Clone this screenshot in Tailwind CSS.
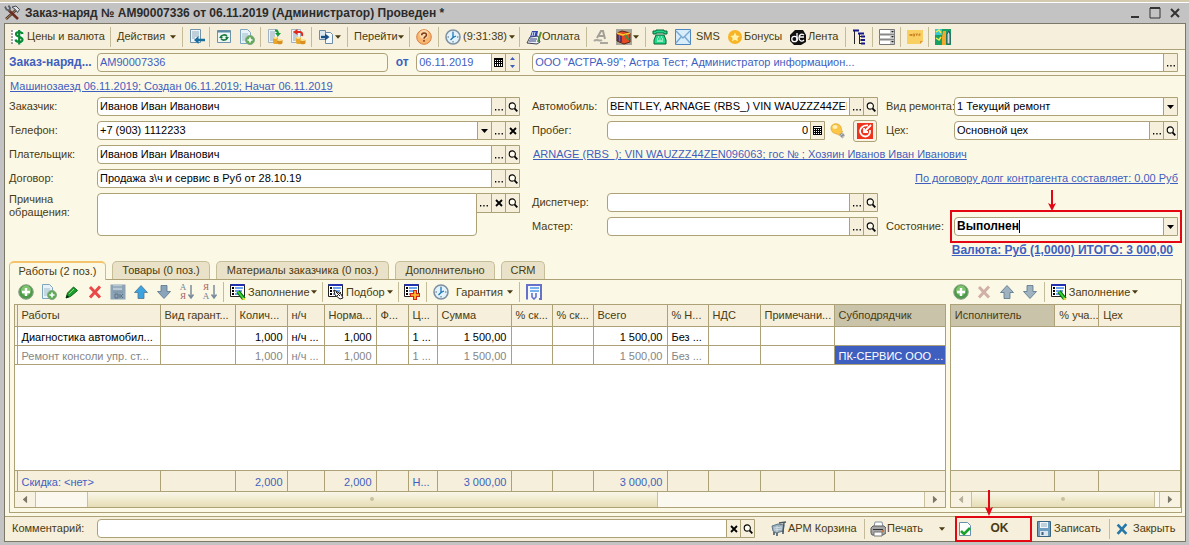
<!DOCTYPE html>
<html lang="ru">
<head>
  <meta charset="UTF-8" />
  <meta name="viewport" content="width=device-width, initial-scale=1" />
  <title>Заказ-наряд № АМ90007336</title>
  <script src="https://cdn.jsdelivr.net/npm/@tailwindcss/browser@4"></script>
</head>
<body class="bg-[#c3c3c3] font-['Liberation_Sans',Arial,sans-serif] text-[11px] leading-[13px] text-[#4a3b12]">

  <!-- Icon sprite -->
  <svg class="hidden">
    <symbol id="i-tri" viewBox="0 0 7 4"><path d="M0 0h7L3.5 4z" fill="currentColor"/></symbol>
    <symbol id="i-dots" viewBox="0 0 10 10"><path d="M1 7h1.300v1.500H1zM4.300 7h1.300v1.500H4.300zM7.600 7h1.300v1.500H7.600z" fill="#000"/></symbol>
    <symbol id="i-x" viewBox="0 0 10 10"><path d="M2 2l6 6M8 2L2 8" stroke="#000" stroke-width="1.800"/></symbol>
    <symbol id="i-lens" viewBox="0 0 10 10"><circle cx="4.3" cy="4" r="3.1" fill="#fffdf0" stroke="#000" stroke-width="1.1"/><path d="M6.5 6.3L9.3 9.3" stroke="#000" stroke-width="1.8"/></symbol>
    <symbol id="i-calc" viewBox="0 0 9 9"><path d="M0 0h9v9H0z" fill="#000"/><path d="M1 1h7v1H1zM1 3h1v1H1zM3 3h1v1H3zM5 3h1v1H5zM7 3h1v1H7zM1 5h1v1H1zM3 5h1v1H3zM5 5h1v1H5zM7 5h1v1H7zM1 7h1v1H1zM3 7h1v1H3zM5 7h1v1H5zM7 7h1v1H7z" fill="#fff"/></symbol>
    <symbol id="i-calendar" viewBox="0 0 9 9"><path d="M0 0h9v9H0z" fill="#000"/><path d="M1 2h1v1H1zM3 2h1v1H3zM5 2h1v1H5zM7 2h1v1H7zM1 4h1v1H1zM3 4h1v1H3zM5 4h1v1H5zM7 4h1v1H7zM1 6h1v2H1zM3 6h1v2H3zM5 6h1v2H5zM7 6h1v2H7z" fill="#fff"/></symbol>
    <symbol id="i-plus" viewBox="0 0 16 16"><circle cx="8" cy="8" r="7.3" fill="#4e9a4c" stroke="#8fa48c"/><circle cx="8" cy="6.5" r="5" fill="#7fc36c"/><path d="M8 4v8M4 8h8" stroke="#fff" stroke-width="2.4"/></symbol>
    <symbol id="i-doc-plus" viewBox="0 0 16 16"><path d="M1.500 .5h7l3 3v11h-10z" fill="#e9f2f8" stroke="#7ea6bd"/><path d="M3 5h6M3 7h6M3 9h4M3 11h3" stroke="#9dbdce"/><circle cx="11" cy="11" r="4.500" fill="#5fab58" stroke="#88a886"/><path d="M11 8.500v5M8.500 11h5" stroke="#fff" stroke-width="1.600"/></symbol>
    <symbol id="i-arrow-up" viewBox="0 0 16 16"><path d="M8 1.500l6.500 7h-3.500v6H5v-6H1.500z" fill="currentColor" stroke="#55738c" stroke-width=".8"/></symbol>
    <symbol id="i-cross" viewBox="0 0 16 16"><path d="M3 3l10 10.500M13 2.500L3 13.500" stroke="currentColor" stroke-width="3"/></symbol>
    <symbol id="i-clock" viewBox="0 0 16 16"><circle cx="8" cy="8" r="7" fill="#e4f3fb" stroke="#7d91a0" stroke-width="1.600"/><path d="M8 2.500v1.500M8 12v1.500M2.500 8H4M12 8h1.500" stroke="#4e6d85"/><path d="M8 3.500V8.500L11 7M8 8.500L5.500 11" stroke="#1877b8" stroke-width="1.300" fill="none"/></symbol>
    <symbol id="i-list" viewBox="0 0 16 16"><path d="M.5.5h14v12H.5z" fill="#fff" stroke="#222"/><path d="M.5 1h14" stroke="#2431b0" stroke-width="2"/><path d="M2 4h2M2 7h2M2 10h2" stroke="#000" stroke-width="2"/><path d="M5 4h8M5 7h7M5 10h5" stroke="#3c86e8" stroke-width="1.600"/></symbol>
    <symbol id="i-fill" viewBox="0 0 16 16"><use href="#i-list"/><path d="M8 7.500l6 7.500" stroke="#0c6b12" stroke-width="4"/><path d="M8 7.500l5.500 7" stroke="#37d534" stroke-width="2"/><path d="M12.500 14.500l2.500 1" stroke="#e5d632" stroke-width="2"/></symbol>
    <symbol id="i-sort" viewBox="0 0 16 16"><path d="M12 1v12M9.500 10.500L12 14l2.500-3.500" stroke="#7b8a9b" stroke-width="1.500" fill="none"/></symbol>
    <symbol id="i-coins" viewBox="0 0 16 16"><path d="M1.500.5h9v13h-9z" fill="#eef3f7" stroke="#9fb3c2"/><path d="M3 3h5M3 5h5M3 7h5M3 9h4M3 11h4" stroke="#8fa9bb"/><path d="M6 8.500v5c0 2 5 2 5 0v-5z" fill="#e8a62a"/><path d="M10 11v3c0 1.800 5.500 1.800 5.500 0v-3z" fill="#d99020"/><ellipse cx="8.500" cy="8.800" rx="2.500" ry="1.100" fill="#fbe08a"/><ellipse cx="12.700" cy="11" rx="2.700" ry="1.100" fill="#fbe08a"/></symbol>
  </svg>

  <div class="flex min-h-screen flex-col border-t-2 border-[#d3cab0]">
    <!-- Title bar -->
    <header class="flex h-[21px] items-center border-t border-white pl-1 pr-2">
      <svg class="h-4 w-4" viewBox="0 0 16 16"><path d="M2 14L12 5" stroke="#4c3a32" stroke-width="2.600"/><path d="M2 14L12 5" stroke="#b58a5a" stroke-width="1"/><path d="M4.500 5l9.500 9" stroke="#6a2c20" stroke-width="2.600"/><path d="M1 1.500l1.500 3 3 1 .5-2.500-1.500-2.500" fill="none" stroke="#5b6068" stroke-width="1.800"/><path d="M8 2l4-1 3.500 3.500-2 3-2-3z" fill="#dfe3e7" stroke="#474d55"/></svg>
      <h1 class="ml-[5px] flex-1 text-[12px] font-bold text-[#2b2b2b]">Заказ-наряд № АМ90007336 от 06.11.2019 (Администратор) Проведен *</h1>
      <div class="flex items-center gap-2">
        <button aria-label="Свернуть"><svg class="h-3 w-3" viewBox="0 0 12 12"><path d="M2 10h8" stroke="#333" stroke-width="2"/></svg></button>
        <button aria-label="Развернуть"><svg class="h-3 w-3" viewBox="0 0 12 12"><path d="M1 1h10v10H1z" fill="none" stroke="#333"/><path d="M1 1h10" stroke="#333" stroke-width="2"/></svg></button>
        <button aria-label="Закрыть окно"><svg class="h-3 w-3" viewBox="0 0 12 12"><path d="M2 2l8 8M10 2l-8 8" stroke="#333" stroke-width="2"/></svg></button>
      </div>
    </header>

    <div class="mb-[3px] ml-1 mr-[3px] flex flex-1 flex-col border border-[#7b7868] bg-[#fcf8e6] [&_svg]:shrink-0">
      <!-- Main toolbar -->
      <nav class="flex h-[26px] items-center whitespace-nowrap border-b border-[#aca177] bg-[#f5efdb] pl-[5px] [&>button]:flex [&>button]:h-full [&>button]:shrink-0 [&>button]:items-center [&>i]:mx-[6px] [&>i]:h-5 [&>i]:w-px [&>i]:shrink-0 [&>i]:bg-[#c4bb98]">
        <button class="w-[94px] gap-px"><svg class="h-4 w-4" viewBox="0 0 16 16"><path d="M1 1h12v13H1z" fill="#fff"/><path d="M1 2h2M1 5h2M1 8h2M1 11h2M1 14h2" stroke="#446"/><path d="M12.500 5C12 2.500 6 2.500 6 5.300S12.500 7.500 12.500 10.800 6 13.500 5.500 10.500M9.200 1v14.500" stroke="#0b8a35" stroke-width="2.200" fill="none"/></svg>Цены и валюта</button>
        <i></i>
        <button class="w-[59px] justify-between">Действия <svg class="h-1 w-[6px]"><use href="#i-tri"/></svg></button>
        <i></i>
        <button class="w-[14px]" aria-label="Лист"><svg class="h-4 w-4" viewBox="0 0 16 16"><path d="M1.500.5h10v13h-10z" fill="#eef4f7" stroke="#7192a8"/><path d="M3 3h7M3 5h7M3 7h7M3 9h3" stroke="#8eaabb"/><path d="M16 11H8" stroke="#176f9f" stroke-width="2.500"/><path d="M5 11l4.500-4v8z" fill="#176f9f"/></svg></button>
        <i></i>
        <button class="w-[15px]" aria-label="Обновить"><svg class="h-4 w-4" viewBox="0 0 16 16"><path d="M1.500 1.500h13v12h-13z" fill="#edf6f5" stroke="#6e93a8"/><path d="M1.500 2.500h13" stroke="#5c8aa6" stroke-width="2"/><path d="M5 8.500c0-3 5-3.500 6-1M11 8.500c0 3-5 3.500-6 1" stroke="#177a3a" stroke-width="1.600" fill="none"/><path d="M9 8h4l-2 2.500zM3 9h4L5 6.500z" fill="#177a3a"/></svg></button>
        <button class="ml-2 w-[15px]" aria-label="Скопировать"><svg class="h-4 w-4"><use href="#i-doc-plus"/></svg></button>
        <i></i>
        <button class="w-[15px]" aria-label="Провести"><svg class="h-4 w-4" viewBox="0 0 16 16"><use href="#i-coins"/><path d="M8 1.500c2 0 3 .5 3 3" stroke="#169a35" stroke-width="2" fill="none"/><path d="M8 4h6l-3 3.500z" fill="#169a35"/></svg></button>
        <button class="ml-2 w-[15px]" aria-label="Отменить проведение"><svg class="h-4 w-4" viewBox="0 0 16 16"><use href="#i-coins"/><path d="M7 3h3c2 0 2.500 1.500 2 4" stroke="#e0281c" stroke-width="2" fill="none"/><path d="M3 3l4.500-3v6z" fill="#e0281c"/></svg></button>
        <i></i>
        <button class="w-[23px] justify-between" aria-label="Ввести на основании"><svg class="h-4 w-4" viewBox="0 0 16 16"><path d="M1.500 1.500h6v9h-6z" fill="#dce8f0" stroke="#6b8ca4"/><path d="M7.500 3.500h5l2 2v9h-7z" fill="#f4f9fc" stroke="#6b8ca4"/><path d="M3 8h5" stroke="#174f86" stroke-width="2.400"/><path d="M7 4.500L11.500 8 7 11.500z" fill="#174f86"/></svg><svg class="h-1 w-[6px]"><use href="#i-tri"/></svg></button>
        <i></i>
        <button class="w-[49px] justify-between">Перейти <svg class="h-1 w-[6px]"><use href="#i-tri"/></svg></button>
        <i></i>
        <button class="w-4" aria-label="Справка"><svg class="h-4 w-4" viewBox="0 0 16 16"><circle cx="8" cy="8" r="7.300" fill="#f8b672" stroke="#d77f3c"/><circle cx="8" cy="5.500" r="4.500" fill="#fcd7ab"/><path d="M5.700 6.200c0-3 4.800-3 4.800-.3C10.500 7.700 8 7.600 8 9.700M8 11v1.700" fill="none" stroke="#7c3b14" stroke-width="1.500"/></svg></button>
        <i></i>
        <button class="w-[68px] gap-[2px]"><svg class="h-4 w-4"><use href="#i-clock"/></svg>(9:31:38)<svg class="ml-auto h-1 w-[6px]"><use href="#i-tri"/></svg></button>
        <i></i>
        <button class="w-[54px]"><svg class="h-4 w-4" viewBox="0 0 16 16"><path d="M1 14l3-6 8-1 2 6-3 2z" fill="#eceff8" stroke="#3d3d55"/><path d="M4 8l2-6h6l-1 5z" fill="#3345a8"/><path d="M7 3l-1 4M9 3L8 7" stroke="#d6e3ff"/><path d="M3 12h7M4 10h7" stroke="#37427d" stroke-width="1.200"/><path d="M15 3l-3 10" stroke="#4e9444" stroke-width="2"/></svg>Оплата</button>
        <i></i>
        <button class="w-4" aria-label="Подпись"><svg class="h-4 w-4" viewBox="0 0 16 16"><path d="M4 9l4-7h2l2 8M6 7h5" fill="none" stroke="#a29f97" stroke-width="2"/><path d="M1 12c3-3 5 1 8-1M7 14h8" stroke="#aaa79f" stroke-width="2" fill="none"/></svg></button>
        <button class="ml-[7px] w-[23px] justify-between" aria-label="Цвет"><svg class="h-4 w-4" viewBox="0 0 16 16"><path d="M0 0h16v16H0z" fill="#a7a49a"/><path d="M1 4l5-2 8 2v9l-6 2-7-3z" fill="#e54a22" stroke="#5b2613"/><path d="M1 4l6 2 7-2" stroke="#f5c933" fill="none" stroke-width="1.500"/><path d="M2 6v6M5 7v6" stroke="#26327f" stroke-width="1.500"/><path d="M9 6l4 5" stroke="#339444" stroke-width="2"/></svg><svg class="h-1 w-[6px]"><use href="#i-tri"/></svg></button>
        <i></i>
        <button class="w-4" aria-label="Позвонить"><svg class="h-4 w-4" viewBox="0 0 16 16"><path d="M1 5V2h3V1h8v1h3v3h-3V4H4v1z" fill="#22d887" stroke="#05643b"/><path d="M4 6h8l2 5v4H2v-4z" fill="#22d887" stroke="#05643b"/><path d="M6 8h1M9 8h1M5 10h1M7.500 10h1M10 10h1M5 12h6" stroke="#fff"/></svg></button>
        <button class="ml-[7px] w-[46px] gap-[5px]"><svg class="h-4 w-4" viewBox="0 0 16 16"><path d="M.5.5h15v15H.5z" fill="#d8ecfa" stroke="#4f86bd"/><path d="M1 2l7 7 7-7M1 14l5-6M15 14l-5-6" fill="none" stroke="#78a9d4" stroke-width="1.400"/></svg>SMS</button>
        <button class="ml-[6px] w-[58px] gap-px"><svg class="h-4 w-4" viewBox="0 0 16 16"><circle cx="8" cy="8" r="7" fill="#f7b526"/><path d="M8 3.500l1.400 3 3.200.4-2.300 2.200.6 3.200L8 10.800l-2.900 1.500.6-3.200-2.300-2.200 3.200-.4z" fill="#fff3ae"/></svg>Бонусы</button>
        <button class="ml-[5px] w-[49px] gap-[2px]"><svg class="h-4 w-4" viewBox="0 0 16 16"><path d="M5 1h8l3 5v7l-5 3H4L0 12V6z" fill="#111"/><circle cx="4.500" cy="10" r="2.700" fill="none" stroke="#fff" stroke-width="1.300"/><path d="M7 4v8M9 8h5M14 6c-3-2-5 0-5 3s3 4 5 2" fill="none" stroke="#fff" stroke-width="1.300"/></svg>Лента</button>
        <i></i>
        <button class="w-[14px]" aria-label="Структура"><svg class="h-4 w-4" viewBox="0 0 16 16"><path d="M2.500 2v13M7.500 5v10" stroke="#222"/><path d="M1 1.500h6M6 4.500h6" stroke="#15158c" stroke-width="2"/><path d="M9 7.500h4M9 11h4M9 14.500h4" stroke="#15158c" stroke-width="2"/><path d="M7 7.500h2M7 11h2M7 14.500h2" stroke="#222"/></svg></button>
        <i></i>
        <button class="w-[15px]" aria-label="Серверы"><svg class="h-4 w-4" viewBox="0 0 16 16"><path d="M.5.500h15v15H.5z" fill="#fff" stroke="#777"/><path d="M0 5.500h16M0 10.500h16" stroke="#888" stroke-width="2"/><path d="M11 1h4v3h-4zM11 6.500h4v3h-4zM11 12h4v3h-4z" fill="#ccc"/><path d="M12 2h3l-1.500 1.500zM12 7h3l-1.500 1.500zM12 12h3l-1.500 1.500z" fill="#222"/></svg></button>
        <i></i>
        <button class="w-[15px]" aria-label="Заметка"><svg class="h-4 w-4" viewBox="0 0 16 16"><path d="M0 1h16v11l-3 3H0z" fill="#f9cf61"/><path d="M13 15v-3h3z" fill="#d99b32"/><path d="M3 7V5l1.500 2V5M6 5h1.500v2H6zM8.500 5H11M9.700 5v2M12 7V5h1.500M12 6h1.500" fill="none" stroke="#c4741c" stroke-width=".8"/></svg></button>
        <i></i>
        <button class="w-4" aria-label="Карта"><svg class="h-4 w-4" viewBox="0 0 16 16"><path d="M0 0h16v16H0z" fill="#16a064"/><path d="M0 0h7v6H0z" fill="#35c7d6"/><path d="M1 3l3-2 2 3M1 9l3 2 2-3" stroke="#f6e944" stroke-width="1.500" fill="none"/><path d="M8 2h3v14H7V8z" fill="#f3a92c"/><path d="M12 5l2-3 1 3v10h-3z" fill="#d9d9e1" stroke="#384859"/></svg></button>
      </nav>

      <!-- Document number -->
      <div class="flex h-[26px] items-center border-b border-[#aca177] pl-1 pr-[7px] text-[#3f5fc0]">
        <label for="num" class="w-[88px] text-[12px] font-bold">Заказ-наряд...</label>
        <div class="flex h-[19px] flex-[291] rounded-[4px] border border-[#aca177] bg-[#fcf8e6]"><input id="num" value="АМ90007336" class="w-full min-w-0 px-[2px] outline-none" /></div>
        <label for="date" class="w-[28px] text-center text-[12px] font-bold">от</label>
        <div class="flex h-[19px] w-[104px] rounded-l-[4px] border border-[#aca177] bg-white">
          <input id="date" value="06.11.2019" class="min-w-0 flex-1 px-[2px] outline-none" />
          <button aria-label="Календарь" class="flex w-[14px] items-center justify-center border-l border-[#aca177] bg-[#f5efdb]"><svg class="h-[9px] w-[9px]"><use href="#i-calendar"/></svg></button>
          <button aria-label="Изменить дату" class="flex w-[14px] flex-col items-center justify-center gap-[5px] border-l border-[#aca177] bg-[#f5efdb]"><svg class="h-[3px] w-[5px] rotate-180"><use href="#i-tri"/></svg><svg class="h-[3px] w-[5px]"><use href="#i-tri"/></svg></button>
        </div>
        <div class="ml-3 flex h-[19px] flex-[648] rounded-l-[4px] border border-[#aca177] bg-white">
          <input aria-label="Организация" value="ООО &quot;АСТРА-99&quot;; Астра Тест; Администратор информацион..." class="min-w-0 flex-1 px-[2px] outline-none" />
          <button aria-label="Выбрать организацию" class="flex w-[14px] items-center justify-center border-l border-[#aca177] bg-[#f5efdb]"><svg class="h-[10px] w-[10px]"><use href="#i-dots"/></svg></button>
        </div>
      </div>

      <!-- Form -->
      <div class="pl-1 pr-[7px] pt-[4px]">
        <a href="#" class="ml-px block h-[17px] whitespace-nowrap text-[#3f5fc0] underline">Машинозаезд 06.11.2019; Создан 06.11.2019; Начат 06.11.2019</a>
        <div class="grid grid-cols-[minmax(0,523fr)_minmax(0,354fr)_minmax(0,292fr)] text-black [&_.box]:flex [&_.box]:h-[19px] [&_.box]:min-w-0 [&_.box]:flex-1 [&_.box]:rounded-l-[4px] [&_.box]:border [&_.box]:border-[#aca177] [&_.box]:bg-white [&_.box>button]:flex [&_.box>button]:w-[14px] [&_.box>button]:shrink-0 [&_.box>button]:items-center [&_.box>button]:justify-center [&_.box>button]:border-l [&_.box>button]:border-[#aca177] [&_.box>button]:bg-[#f5efdb] [&_input]:min-w-0 [&_input]:flex-1 [&_input]:px-[2px] [&_input]:outline-none [&_label]:shrink-0 [&_label]:whitespace-nowrap [&_label]:text-[#4a3b12]">

          <div class="flex flex-col gap-[5px] pr-3">
            <div class="flex items-center"><label for="client" class="w-[88px]">Заказчик:</label>
              <div class="box"><input id="client" value="Иванов Иван Иванович" /><button aria-label="Выбрать"><svg class="h-[10px] w-[10px]"><use href="#i-dots"/></svg></button><button aria-label="Открыть"><svg class="h-[10px] w-[10px]"><use href="#i-lens"/></svg></button></div></div>
            <div class="flex items-center"><label for="phone" class="w-[88px]">Телефон:</label>
              <div class="box"><input id="phone" value="+7 (903) 1112233" /><button aria-label="Список"><svg class="h-1 w-[7px]"><use href="#i-tri"/></svg></button><button aria-label="Выбрать"><svg class="h-[10px] w-[10px]"><use href="#i-dots"/></svg></button><button aria-label="Очистить"><svg class="h-[10px] w-[10px]"><use href="#i-x"/></svg></button></div></div>
            <div class="flex items-center"><label for="payer" class="w-[88px]">Плательщик:</label>
              <div class="box"><input id="payer" value="Иванов Иван Иванович" /><button aria-label="Выбрать"><svg class="h-[10px] w-[10px]"><use href="#i-dots"/></svg></button><button aria-label="Открыть"><svg class="h-[10px] w-[10px]"><use href="#i-lens"/></svg></button></div></div>
            <div class="flex items-center"><label for="contract" class="w-[88px]">Договор:</label>
              <div class="box"><input id="contract" value="Продажа з\ч и сервис в Руб от 28.10.19" /><button aria-label="Выбрать"><svg class="h-[10px] w-[10px]"><use href="#i-dots"/></svg></button><button aria-label="Открыть"><svg class="h-[10px] w-[10px]"><use href="#i-lens"/></svg></button></div></div>
            <div class="flex items-start"><label for="reason" class="w-[88px]">Причина<br />обращения:</label>
              <textarea id="reason" class="h-[43px] min-w-0 flex-1 resize-none rounded-[4px] rounded-tr-none border border-[#aca177] bg-white px-[2px] outline-none"></textarea>
              <div class="flex h-5 border-y border-r border-[#aca177] bg-[#f5efdb] [&>button]:flex [&>button]:w-[14px] [&>button]:items-center [&>button]:justify-center [&>button+button]:border-l [&>button]:border-[#aca177]"><button aria-label="Выбрать"><svg class="h-[10px] w-[10px]"><use href="#i-dots"/></svg></button><button aria-label="Очистить"><svg class="h-[10px] w-[10px]"><use href="#i-x"/></svg></button><button aria-label="Открыть"><svg class="h-[10px] w-[10px]"><use href="#i-lens"/></svg></button></div></div>
          </div>

          <div class="flex flex-col gap-[5px] pr-2">
            <div class="flex items-center"><label for="car" class="w-[75px]">Автомобиль:</label>
              <div class="box"><input id="car" value="BENTLEY, ARNAGE (RBS_) VIN WAUZZZ44ZEN096063" /><button aria-label="Выбрать"><svg class="h-[10px] w-[10px]"><use href="#i-dots"/></svg></button><button aria-label="Открыть"><svg class="h-[10px] w-[10px]"><use href="#i-lens"/></svg></button></div></div>
            <div class="flex h-[19px] items-center"><label for="run" class="w-[75px]">Пробег:</label>
              <div class="box"><input id="run" value="0" class="text-right" /><button aria-label="Калькулятор"><svg class="h-[9px] w-[9px]"><use href="#i-calc"/></svg></button></div>
              <button aria-label="Подсказка" class="mx-[5px]"><svg class="h-4 w-4" viewBox="0 0 16 16"><path d="M1 5C1 0 9 -1 11 4c.8 2 .5 3.500 1.500 5l-4 3C7 10.500 5 11 3 9.500 1.500 8.500 1 6.500 1 5z" fill="#fbc646" stroke="#dea02b" stroke-width=".7"/><ellipse cx="5" cy="4" rx="2.500" ry="2" fill="#fff0b5"/><path d="M9 12l3.500-2.500 2.500 3-2.500 3z" fill="#8b8f95"/><path d="M10.500 12.500l2.500-2M12 14.500l2.500-2" stroke="#d7dadd"/></svg></button>
              <button aria-label="Сервис" class="ml-[2px] mr-px flex h-[22px] w-6 shrink-0 items-center justify-center rounded-[3px] border border-[#aca177] bg-[#f8f3e4]"><svg class="h-4 w-4" viewBox="0 0 16 16"><path d="M0 0h16v16H0z" fill="#f0331c"/><path d="M11 2.500C6 2 3 5 3 8s2.500 5.500 5.500 5.500S13.500 11 13 7" fill="none" stroke="#fff" stroke-width="1.800"/><path d="M7 5v4h4M7 9l7-7" stroke="#fff" stroke-width="1.800" fill="none"/></svg></button></div>
            <a href="#" class="ml-px h-[19px] whitespace-nowrap pt-[3px] text-[#3f5fc0] underline">ARNAGE (RBS_); VIN WAUZZZ44ZEN096063; гос № ; Хозяин Иванов Иван Иванович</a>
            <div class="h-[19px]"></div>
            <div class="flex items-center"><label for="disp" class="w-[75px]">Диспетчер:</label>
              <div class="box"><input id="disp" /><button aria-label="Выбрать"><svg class="h-[10px] w-[10px]"><use href="#i-dots"/></svg></button><button aria-label="Открыть"><svg class="h-[10px] w-[10px]"><use href="#i-lens"/></svg></button></div></div>
            <div class="flex items-center"><label for="master" class="w-[75px]">Мастер:</label>
              <div class="box"><input id="master" /><button aria-label="Выбрать"><svg class="h-[10px] w-[10px]"><use href="#i-dots"/></svg></button><button aria-label="Открыть"><svg class="h-[10px] w-[10px]"><use href="#i-lens"/></svg></button></div></div>
          </div>

          <div class="flex flex-col gap-[5px]">
            <div class="flex items-center"><label for="kind" class="w-[68px]">Вид ремонта:</label>
              <div class="box"><select id="kind" class="min-w-0 flex-1 appearance-none px-[2px] outline-none"><option>1 Текущий ремонт</option></select><button aria-label="Список"><svg class="h-1 w-[7px]"><use href="#i-tri"/></svg></button></div></div>
            <div class="flex items-center"><label for="shop" class="w-[68px]">Цех:</label>
              <div class="box"><input id="shop" value="Основной цех" /><button aria-label="Выбрать"><svg class="h-[10px] w-[10px]"><use href="#i-dots"/></svg></button><button aria-label="Открыть"><svg class="h-[10px] w-[10px]"><use href="#i-lens"/></svg></button></div></div>
            <div class="h-[19px]"></div>
            <a href="#" class="h-[19px] whitespace-nowrap pt-[3px] text-right text-[#3f5fc0] underline">По договору долг контрагента составляет: 0,00 Руб</a>
            <div class="h-[19px]"></div>
            <div class="flex items-center"><label for="state" class="w-[68px]">Состояние:</label>
              <div class="relative flex flex-1">
                <div class="box"><input id="state" value="Выполнен" class="text-[12px] font-bold" /><button aria-label="Список"><svg class="h-1 w-[7px]"><use href="#i-tri"/></svg></button></div>
                <span class="absolute left-[65px] top-[3px] h-[13px] w-px bg-black"></span>
                <!-- Red callout -->
                <span class="pointer-events-none absolute -inset-x-[4px] -inset-y-[7px] border-2 border-[#e30613]"></span>
                <svg class="absolute -top-[27px] left-[93px] h-[21px] w-[10px]" viewBox="0 0 10 21"><path d="M5 0v18" stroke="#e30613" stroke-width="2"/><path d="M1 13l4 2 4-2-4 8z" fill="#e30613"/></svg>
              </div></div>
          </div>
        </div>
        <a href="#" class="mr-[5px] mt-2 block h-[17px] whitespace-nowrap text-right text-[12px] font-bold text-[#3f5fc0] underline">Валюта: Руб (1,0000) ИТОГО: 3 000,00</a>
      </div>

      <!-- Tabs -->
      <div role="tablist" class="flex gap-[6px] pl-1 [&>button]:h-[18px] [&>button]:rounded-t-[5px] [&>button]:border [&>button]:border-b-0 [&>button]:border-[#c6bd99] [&>button+button]:bg-[#e9e2c8]">
        <button role="tab" aria-selected="true" class="relative z-10 -mb-px h-[19px]! w-[97px] border-t-2! border-t-[#f3c46c]! bg-[#fcf8e6]">Работы (2 поз.)</button>
        <button role="tab" class="w-[98px]">Товары (0 поз.)</button>
        <button role="tab" class="w-[173px]">Материалы заказчика (0 поз.)</button>
        <button role="tab" class="w-[100px]">Дополнительно</button>
        <button role="tab" class="w-[44px]">CRM</button>
      </div>

      <div class="mx-[3px] mb-[3px] ml-1 grid grid-cols-[minmax(0,931fr)_minmax(0,231fr)] gap-1 border border-[#aca177] pb-1 pl-1 [&_td]:overflow-hidden [&_td]:whitespace-nowrap [&_td]:border-l [&_td]:border-[#aca177] [&_td]:px-1 [&_td]:pt-[3px] [&_th]:overflow-hidden [&_th]:whitespace-nowrap [&_th]:border-l [&_th]:border-[#aca177] [&_th]:pl-1 [&_th]:pt-px [&_th]:text-left [&_th]:font-normal">
        <!-- Works -->
        <section>
          <div class="flex h-6 items-center pl-1 [&>button]:flex [&>button]:shrink-0 [&>button]:items-center [&>i]:h-5 [&>i]:w-px [&>i]:bg-[#c4bb98]">
            <div class="flex items-center gap-[7px] [&>button]:flex [&>button]:items-center">
              <button aria-label="Добавить"><svg class="h-4 w-4"><use href="#i-plus"/></svg></button>
              <button aria-label="Добавить копированием"><svg class="h-4 w-4"><use href="#i-doc-plus"/></svg></button>
              <button aria-label="Изменить"><svg class="h-4 w-4" viewBox="0 0 16 16"><path d="M2 14l1.500-5L9.500 3l4 3.500-7 6z" fill="#1f9e2d" stroke="#0b6015"/><path d="M2 14l1-3 2 2z" fill="#111"/><path d="M5 10l5-5" stroke="#7fe07a"/></svg></button>
              <button aria-label="Удалить" class="text-[#ea4848]"><svg class="h-4 w-4"><use href="#i-cross"/></svg></button>
              <button aria-label="Закончить редактирование"><svg class="h-4 w-4" viewBox="0 0 16 16"><path d="M.5.500h15v15H.5z" fill="#8da4b6"/><path d="M3 1h9v5H3z" fill="#b9c9d4"/><path d="M3 3h9M3 8h10" stroke="#7a92a5"/><path d="M5 10h3v4H5zM10 10v4M13 10l-2 2 2 2" fill="none" stroke="#5c7183"/></svg></button>
              <button aria-label="Вверх" class="text-[#3ba4e0]"><svg class="h-4 w-4"><use href="#i-arrow-up"/></svg></button>
              <button aria-label="Вниз" class="text-[#8aa5b9]"><svg class="h-4 w-4 rotate-180"><use href="#i-arrow-up"/></svg></button>
              <button aria-label="По возрастанию" class="font-['Liberation_Serif',serif] text-[9px] leading-[9px]"><span class="w-[8px]"><span class="block text-[#6e7f93]">А</span><span class="block text-[#a9605c]">Я</span></span><svg class="-ml-2 h-4 w-4"><use href="#i-sort"/></svg></button>
              <button aria-label="По убыванию" class="font-['Liberation_Serif',serif] text-[9px] leading-[9px]"><span class="w-[8px]"><span class="block text-[#a9605c]">Я</span><span class="block text-[#6e7f93]">А</span></span><svg class="-ml-2 h-4 w-4"><use href="#i-sort"/></svg></button>
            </div>
            <i class="ml-[5px] mr-[6px]"></i>
            <button class="w-[87px]"><svg class="mr-[2px] h-4 w-4"><use href="#i-fill"/></svg>Заполнение<svg class="ml-auto h-1 w-[6px]"><use href="#i-tri"/></svg></button>
            <i class="mx-[5px]"></i>
            <button class="w-[65px]"><svg class="mr-[2px] h-4 w-4" viewBox="0 0 16 16"><use href="#i-list"/><path d="M6 6l7 4 2 4-3 1-5-4z" fill="#fff" stroke="#222"/><path d="M8 8l4 4M9 12l4-4" stroke="#222"/></svg>Подбор<svg class="ml-auto h-1 w-[6px]"><use href="#i-tri"/></svg></button>
            <i class="mx-[5px]"></i>
            <button aria-label="Добавить набор"><svg class="h-4 w-4" viewBox="0 0 16 16"><use href="#i-list"/><path d="M11 6v10M6 11h10" stroke="#d52414" stroke-width="4"/><path d="M11 7v8M7 11h8" stroke="#ffc634" stroke-width="1.600"/></svg></button>
            <i class="mx-[6px]"></i>
            <button class="w-[80px]"><svg class="mr-[7px] h-4 w-4"><use href="#i-clock"/></svg>Гарантия<svg class="ml-auto h-1 w-[6px]"><use href="#i-tri"/></svg></button>
            <i class="mx-[6px]"></i>
            <button aria-label="Отчет"><svg class="h-4 w-4" viewBox="0 0 16 16"><path d="M1 15.500V1h14v14h-2" fill="#f6f8ff" stroke="#6672c8" stroke-width="2"/><path d="M4 4h9M4 7h9" stroke="#4d9bea" stroke-width="1.500"/><path d="M6 9v4l2 2 2-2V9" fill="none" stroke="#6672c8" stroke-width="1.600"/></svg></button>
          </div>
          <div class="border border-[#aca177] bg-white">
            <table class="w-full table-fixed border-collapse">
              <colgroup><col class="w-[2px]" /><col class="w-[143px]" /><col class="w-[75px]" /><col class="w-[52px]" /><col class="w-[37px]" /><col class="w-[52px]" /><col class="w-[32px]" /><col class="w-[29px]" /><col class="w-[74px]" /><col class="w-[41px]" /><col class="w-[41px]" /><col class="w-[74px]" /><col class="w-[41px]" /><col class="w-[52px]" /><col class="w-[74px]" /><col /></colgroup>
              <thead class="bg-[#f5efdb]">
                <tr class="h-[21px] border-b border-[#aca177]"><td class="border-l-0! px-0!"></td><th>Работы</th><th>Вид гарант...</th><th>Колич...</th><th>н/ч</th><th>Норма...</th><th>Ф...</th><th>Ц...</th><th>Сумма</th><th>% ск...</th><th>% ск...</th><th>Всего</th><th>% Н...</th><th>НДС</th><th>Примечани...</th><th class="bg-[#c9c3a9]">Субподрядчик</th></tr>
              </thead>
              <tbody>
                <tr class="h-[19px] border-b border-[#aca177] text-black"><td class="border-l-0! px-0!"></td><td>Диагностика автомобил...</td><td></td><td class="text-right">1,000</td><td>н/ч ...</td><td class="text-right">1,000</td><td></td><td>1 ...</td><td class="text-right">1 500,00</td><td></td><td></td><td class="text-right">1 500,00</td><td>Без ...</td><td></td><td></td><td></td></tr>
                <tr class="h-[19px] border-b border-[#aca177] text-[#858585]"><td class="border-l-0! px-0!"></td><td>Ремонт консоли упр. ст...</td><td></td><td class="text-right">1,000</td><td>н/ч ...</td><td class="text-right">1,000</td><td></td><td>1 ...</td><td class="text-right">1 500,00</td><td></td><td></td><td class="text-right">1 500,00</td><td>Без ...</td><td></td><td></td><td class="bg-[#3f5fc0] text-white">ПК-СЕРВИС ООО ...</td></tr>
                <tr class="h-[106px]"><td colspan="16" class="border-l-0!"></td></tr>
              </tbody>
              <tfoot class="bg-[#f5efdb] text-[#3f5fc0]">
                <tr class="h-[21px] border-y border-[#aca177]"><td class="border-l-0! px-0!"></td><td>Скидка: &lt;нет&gt;</td><td></td><td class="text-right">2,000</td><td></td><td class="text-right">2,000</td><td></td><td>Н...</td><td class="text-right">3 000,00</td><td></td><td></td><td class="text-right">3 000,00</td><td></td><td></td><td></td><td></td></tr>
              </tfoot>
            </table>
            <div class="flex h-[15px] bg-[#fbf8f0] text-[#7c7868]">
              <button aria-label="Влево" class="flex w-[21px] items-center justify-center border-r border-[#c9c0a0] bg-[#f7f2e2]"><svg class="h-[5px] w-[8px] rotate-90"><use href="#i-tri"/></svg></button>
              <div class="w-[52px] border-r border-[#c9c0a0]"></div>
              <div class="flex flex-[569] items-center justify-center border-r border-[#c9c0a0] bg-linear-to-b from-[#faf7ea] to-[#e6ddb4]"><span class="h-1 w-1 rounded-full bg-[#c9c09c]"></span></div>
              <div class="flex-[266]"></div>
              <button aria-label="Вправо" class="flex w-[21px] items-center justify-center border-l border-[#c9c0a0] bg-[#f7f2e2]"><svg class="h-[5px] w-[8px] -rotate-90"><use href="#i-tri"/></svg></button>
            </div>
          </div>
        </section>

        <!-- Performers -->
        <section>
          <div class="flex h-6 items-center pl-[3px] [&>button]:flex [&>button]:shrink-0 [&>button]:items-center">
            <button aria-label="Добавить"><svg class="h-4 w-4"><use href="#i-plus"/></svg></button>
            <button aria-label="Удалить" class="ml-[7px] text-[#d0b1a8]"><svg class="h-4 w-4"><use href="#i-cross"/></svg></button>
            <button aria-label="Вверх" class="ml-[7px] text-[#9eb2bf]"><svg class="h-4 w-4"><use href="#i-arrow-up"/></svg></button>
            <button aria-label="Вниз" class="ml-[7px] text-[#9eb2bf]"><svg class="h-4 w-4 rotate-180"><use href="#i-arrow-up"/></svg></button>
            <i class="mx-[6px] h-5 w-px bg-[#c4bb98]"></i>
            <button class="w-[87px]"><svg class="mr-[2px] h-4 w-4"><use href="#i-fill"/></svg>Заполнение<svg class="ml-auto h-1 w-[6px]"><use href="#i-tri"/></svg></button>
          </div>
          <div class="border border-[#aca177] bg-white">
            <table class="w-full table-fixed border-collapse">
              <colgroup><col class="w-[104px]" /><col class="w-[44px]" /><col /></colgroup>
              <thead class="bg-[#f5efdb]"><tr class="h-[21px] border-b border-[#aca177]"><th class="border-l-0! bg-[#c9c3a9]">Исполнитель</th><th>% уча...</th><th>Цех</th></tr></thead>
              <tbody><tr class="h-[144px]"><td colspan="3" class="border-l-0!"></td></tr></tbody>
              <tfoot class="bg-[#f5efdb]"><tr class="h-[21px] border-y border-[#aca177]"><td class="border-l-0!"></td><td></td><td></td></tr></tfoot>
            </table>
            <div class="flex h-[15px] bg-[#fbf8f0] text-[#7c7868]">
              <button aria-label="Влево" class="flex w-[21px] items-center justify-center border-r border-[#c9c0a0] bg-[#f7f2e2] text-[#b5b09a]"><svg class="h-[5px] w-[8px] rotate-90"><use href="#i-tri"/></svg></button>
              <div class="flex flex-1 items-center justify-center border-r border-[#c9c0a0] bg-linear-to-b from-[#faf7ea] to-[#e6ddb4]"><span class="h-1 w-1 rounded-full bg-[#c9c09c]"></span></div>
              <button aria-label="Вправо" class="ml-1 flex w-[21px] items-center justify-center border-l border-[#c9c0a0] bg-[#f7f2e2]"><svg class="h-[5px] w-[8px] -rotate-90"><use href="#i-tri"/></svg></button>
            </div>
          </div>
        </section>
      </div>

      <!-- Bottom bar -->
      <footer class="flex flex-1 items-center whitespace-nowrap border-t border-[#aca177] bg-[#f5efdb] px-[7px] [&>button]:flex [&>button]:shrink-0 [&>button]:items-center [&>i]:h-5 [&>i]:w-px [&>i]:bg-[#c4bb98]">
        <label for="comment" class="w-[85px] shrink-0">Комментарий:</label>
        <div class="flex h-[19px] min-w-0 flex-1 rounded-l-[4px] border border-[#aca177] bg-white">
          <input id="comment" class="min-w-0 flex-1 px-[2px] outline-none" />
          <button aria-label="Очистить" class="flex w-[14px] items-center justify-center border-l border-[#aca177] bg-[#f5efdb]"><svg class="h-[10px] w-[10px]"><use href="#i-x"/></svg></button>
          <button aria-label="Открыть" class="flex w-[14px] items-center justify-center border-l border-[#aca177] bg-[#f5efdb]"><svg class="h-[10px] w-[10px]"><use href="#i-lens"/></svg></button>
        </div>
        <button class="ml-4 w-[88px] gap-px"><svg class="h-4 w-4" viewBox="0 0 16 16"><path d="M1 5l6-2 6 1-1 6-7 2-3-2z" fill="#9db0bd" stroke="#617787"/><path d="M8 2l7-1M13 2l-1 9" stroke="#465661" stroke-width="1.400"/><path d="M3 7l8-1M3 9l8-1M6 5v6" stroke="#d2dde4"/><path d="M3 11v3M6 12v3M12 10v3" stroke="#4a5a66" stroke-width="1.600"/></svg>АРМ Корзина</button>
        <i class="mx-[5px]"></i>
        <button class="w-[75px] gap-px"><svg class="h-4 w-4" viewBox="0 0 16 16"><path d="M4 6l1-5h7l1 5" fill="#fff" stroke="#8392a0"/><path d="M1 7l2-2h11l2 2v5l-3 2H2l-1-2z" fill="#a6a6a6" stroke="#5d5d5d"/><path d="M4 11h8v4H4z" fill="#fff" stroke="#777"/><path d="M3 8.500h10" stroke="#333"/><path d="M12 10h2" stroke="#d9631b" stroke-width="1.500"/></svg>Печать<svg class="ml-auto h-1 w-[6px]"><use href="#i-tri"/></svg></button>
        <div class="relative -my-px ml-[10px] flex h-[26px] w-[77px] shrink-0 items-center border-2 border-[#e30613]">
          <button class="flex w-full items-center text-[12px] font-bold"><svg class="h-4 w-4" viewBox="0 0 16 16"><path d="M2.500 1.500h8l3 3v10h-11z" fill="#fff" stroke="#6892ac"/><path d="M4 10l3 3 6-6" fill="none" stroke="#19a22b" stroke-width="2.600"/></svg><span class="flex-1 pr-1 text-center">OK</span></button>
          <svg class="absolute -top-[28px] left-[27px] h-[26px] w-[10px]" viewBox="0 0 10 26"><path d="M5 0v22" stroke="#e30613" stroke-width="2"/><path d="M1 17l4 2 4-2-4 9z" fill="#e30613"/></svg>
        </div>
        <button class="ml-1 w-[68px] gap-[2px]"><svg class="h-4 w-4" viewBox="0 0 16 16"><path d="M1.500.500h13v15h-13z" fill="#6e9fc0" stroke="#39637f"/><path d="M4 1h8v6H4z" fill="#f1f6f9"/><path d="M5 3h6M5 5h6" stroke="#8cabc0"/><path d="M4 10h8v5H4z" fill="#dbe6ed"/><path d="M5.500 11h2v3h-2z" fill="#39637f"/></svg>Записать</button>
        <i class="mx-[5px]"></i>
        <button class="w-[63px] gap-1"><svg class="h-[14px] w-[14px] text-[#2677a8]"><use href="#i-cross"/></svg>Закрыть</button>
      </footer>
    </div>
  </div>
</body>
</html>
